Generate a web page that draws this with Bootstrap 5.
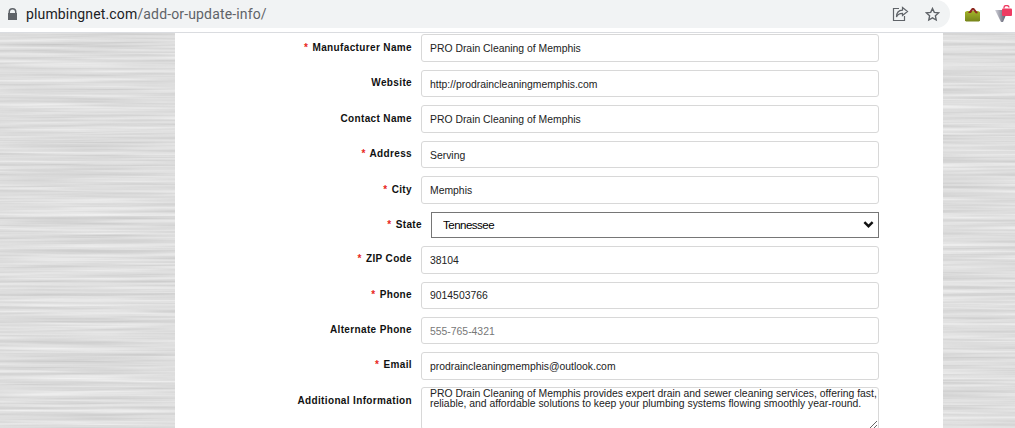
<!DOCTYPE html>
<html lang="en">

<head>
    <meta charset="UTF-8">
    <title>Add or Update Info</title>
    <link href="https://cdn.jsdelivr.net/npm/bootstrap@5.3.3/dist/css/bootstrap.min.css" rel="stylesheet">
    <style>
        html,
        body {
            height: 428px;
            overflow: hidden;
        }

        body {
            font-family: "Liberation Sans", Arial, sans-serif;
            background-color: #dcdcdc;
            background-image: url("data:image/svg+xml,%3Csvg xmlns='http://www.w3.org/2000/svg' width='1015' height='428'%3E%3Cfilter id='m' color-interpolation-filters='sRGB'%3E%3CfeTurbulence type='fractalNoise' baseFrequency='0.006 0.3' numOctaves='3' seed='7'/%3E%3CfeColorMatrix values='0.2 0 0 0 0.77 0.2 0 0 0 0.77 0.2 0 0 0 0.77 0 0 0 0 1'/%3E%3C/filter%3E%3Crect width='1015' height='428' filter='url(%23m)'/%3E%3C/svg%3E");
        }

        .browser-bar {
            height: 33px;
            background: #fff;
            border-bottom: 1px solid #dadce0;
        }

        .url-pill {
            width: 950px;
            height: 28px;
            background: #f1f3f4;
            border-radius: 0 14px 14px 0;
            padding-left: 7px;
            padding-right: 10px;
        }

        .url-text {
            font-family: "Roboto", "Liberation Sans", sans-serif;
            font-size: 14px;
            letter-spacing: .15px;
            color: #5f6368;
            margin-left: 8px;
        }

        .url-host {
            color: #202124;
        }

        .ext-icons {
            gap: 14px;
            margin-left: 15px;
        }

        .form-panel {
            width: 768px;
            height: 395px;
            margin-left: 175px;
            background: #fff;
            padding-top: 1.4px;
        }

        .info-row {
            height: 27.4px;
            margin-bottom: 8.1px;
        }

        .info-row-state {
            margin-bottom: 7.1px;
        }

        .info-row-state~.info-row {
            margin-bottom: 7.9px;
        }

        .info-label {
            width: 237px;
            margin: 0 9px 0 0;
            padding-bottom: 2px;
            text-align: right;
            font-size: 10px;
            font-weight: 700;
            letter-spacing: .36px;
            color: #111;
        }

        .info-label-wide {
            width: 247px;
        }

        .req {
            color: #e8261c;
            margin-right: 1px;
        }

        .info-input.form-control {
            width: 458px;
            height: 27.4px;
            min-height: 0;
            padding: 3px 8px 2px;
            font-size: 10.4px;
            color: #222;
            border: 1px solid #d8d8d8;
            border-radius: 3px;
        }

        .info-input.form-control::placeholder {
            color: #777;
        }

        .info-select.form-select {
            width: 448px;
            height: 26px;
            padding: 1px 11px 0;
            font-size: 11.5px;
            letter-spacing: -.5px;
            color: #000;
            border: 1px solid #767676;
            border-radius: 0;
            background-position: right 4px center;
            background-size: 11px 11px;
            background-image: url("data:image/svg+xml,%3Csvg xmlns='http://www.w3.org/2000/svg' viewBox='0 0 16 16'%3E%3Cpath fill='none' stroke='%23111' stroke-width='3.500' d='M2 4.500l6 6 6-6'/%3E%3C/svg%3E");
        }

        .info-text.form-control {
            width: 458px;
            height: 43px;
            min-height: 0;
            padding: 1px 0 0 8px;
            font-size: 10.4px;
            line-height: 10px;
            color: #222;
            border: 1px solid #d8d8d8;
            border-radius: 3px;
        }

        .info-label-text {
            margin-top: 6px;
        }
    </style>
</head>

<body>
    <!-- Browser toolbar -->
    <div class="browser-bar">
        <div class="d-flex align-items-center">
            <div class="url-pill d-flex align-items-center flex-shrink-0">
                <svg width="11" height="13" viewBox="0 0 11 13">
                    <path fill="#5f6368" d="M1.5 5V4a4 4 0 0 1 8 0v1h.5v7H1V5zM3 5h5V4a2.5 2.5 0 0 0-5 0z" />
                </svg>
                <span class="url-text"><span class="url-host">plumbingnet.com</span>/add-or-update-info/</span>
                <div class="ms-auto d-flex align-items-center gap-3">
                    <svg width="17" height="16" viewBox="0 0 17 16" fill="none" stroke="#5f6368" stroke-width="1.2">
                        <path d="M7 2.5H1.5v12h11V10" />
                        <path d="M10.5 1.5l5 4-5 4V7.3C7.5 7.3 5.5 8.5 4.5 11c0-4 2-6.600 6-6.800z" />
                    </svg>
                    <svg width="15" height="15" viewBox="0 0 15 15" fill="none" stroke="#5f6368" stroke-width="1.4">
                        <path d="M7.500 1.500l1.800 3.900 4.200.5-3.100 2.900.8 4.200-3.700-2.100-3.700 2.100.8-4.200L1.500 5.900l4.200-.5z" />
                    </svg>
                </div>
            </div>
            <div class="ext-icons d-flex align-items-center">
                <svg width="16" height="15" viewBox="0 0 16 15">
                    <defs>
                        <linearGradient id="bag" x1="0" y1="0" x2="0" y2="1">
                            <stop offset="0" stop-color="#a3b52a" />
                            <stop offset="1" stop-color="#76841a" />
                        </linearGradient>
                    </defs>
                    <path fill="url(#bag)" d="M0 5l2-1h11l2 1v8.500l-1 1H1l-1-1z" />
                    <path fill="#8e2a22" d="M3 6l4-5 2 0 4 5-2 .5-3-3.500-2 3z" />
                </svg>
                <svg width="18" height="18" viewBox="0 0 18 18">
                    <defs>
                        <linearGradient id="tri" x1="0" y1="0" x2="1" y2="0">
                            <stop offset="0" stop-color="#d5d5dc" />
                            <stop offset=".5" stop-color="#8a8b99" />
                            <stop offset="1" stop-color="#45485a" />
                        </linearGradient>
                    </defs>
                    <path fill="url(#tri)" d="M0 5h13l-5 12h-2z" />
                    <rect x="7" y="3.500" width="10" height="7.500" rx="1" fill="#ee3b62" />
                    <path fill="none" stroke="#ee3b62" stroke-width="1.300" d="M9 3.500V2.500a2.500 2 0 0 1 5 0" />
                </svg>
            </div>
        </div>
    </div>

    <!-- Form -->
    <form class="form-panel">
        <div class="info-row d-flex align-items-center">
            <label class="info-label"><span class="req">*</span> Manufacturer Name</label>
            <input class="form-control info-input" type="text" value="PRO Drain Cleaning of Memphis">
        </div>
        <div class="info-row d-flex align-items-center">
            <label class="info-label">Website</label>
            <input class="form-control info-input" type="text" value="http://prodraincleaningmemphis.com">
        </div>
        <div class="info-row d-flex align-items-center">
            <label class="info-label">Contact Name</label>
            <input class="form-control info-input" type="text" value="PRO Drain Cleaning of Memphis">
        </div>
        <div class="info-row d-flex align-items-center">
            <label class="info-label"><span class="req">*</span> Address</label>
            <input class="form-control info-input" type="text" value="Serving">
        </div>
        <div class="info-row d-flex align-items-center">
            <label class="info-label"><span class="req">*</span> City</label>
            <input class="form-control info-input" type="text" value="Memphis">
        </div>
        <div class="info-row info-row-state d-flex align-items-center">
            <label class="info-label info-label-wide"><span class="req">*</span> State</label>
            <select class="form-select info-select align-self-start">
                <option>Tennessee</option>
            </select>
        </div>
        <div class="info-row d-flex align-items-center">
            <label class="info-label"><span class="req">*</span> ZIP Code</label>
            <input class="form-control info-input" type="text" value="38104">
        </div>
        <div class="info-row d-flex align-items-center">
            <label class="info-label"><span class="req">*</span> Phone</label>
            <input class="form-control info-input" type="text" value="9014503766">
        </div>
        <div class="info-row d-flex align-items-center">
            <label class="info-label">Alternate Phone</label>
            <input class="form-control info-input" type="text" placeholder="555-765-4321">
        </div>
        <div class="info-row d-flex align-items-center">
            <label class="info-label"><span class="req">*</span> Email</label>
            <input class="form-control info-input" type="text" value="prodraincleaningmemphis@outlook.com">
        </div>
        <div class="d-flex align-items-start">
            <label class="info-label info-label-text">Additional Information</label>
            <textarea class="form-control info-text">PRO Drain Cleaning of Memphis provides expert drain and sewer cleaning services, offering fast, reliable, and affordable solutions to keep your plumbing systems flowing smoothly year-round.</textarea>
        </div>
    </form>
</body>

</html>
